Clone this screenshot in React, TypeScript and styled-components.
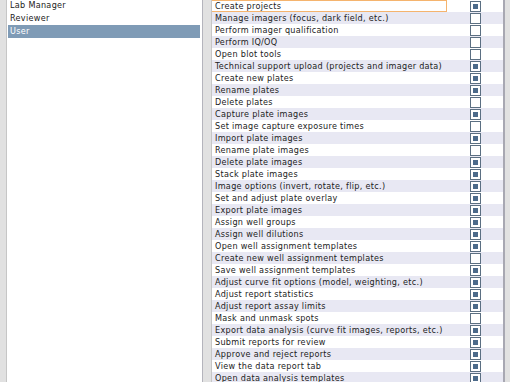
import styled, {createGlobalStyle} from "styled-components";

const roles = ["Lab Manager", "Reviewer", "User"];

const permissions: [string, boolean][] = [
    ["Create projects", true],
    ["Manage imagers (focus, dark field, etc.)", false],
    ["Perform imager qualification", false],
    ["Perform IQ/OQ", false],
    ["Open blot tools", false],
    ["Technical support upload (projects and imager data)", true],
    ["Create new plates", true],
    ["Rename plates", true],
    ["Delete plates", false],
    ["Capture plate images", true],
    ["Set image capture exposure times", false],
    ["Import plate images", true],
    ["Rename plate images", false],
    ["Delete plate images", true],
    ["Stack plate images", true],
    ["Image options (invert, rotate, flip, etc.)", true],
    ["Set and adjust plate overlay", true],
    ["Export plate images", true],
    ["Assign well groups", true],
    ["Assign well dilutions", true],
    ["Open well assignment templates", true],
    ["Create new well assignment templates", false],
    ["Save well assignment templates", true],
    ["Adjust curve fit options (model, weighting, etc.)", true],
    ["Adjust report statistics", true],
    ["Adjust report assay limits", true],
    ["Mask and unmask spots", false],
    ["Export data analysis (curve fit images, reports, etc.)", true],
    ["Submit reports for review", true],
    ["Approve and reject reports", true],
    ["View the data report tab", true],
    ["Open data analysis templates", true],
];

export default function App() {
    return <>
        <GlobalStyle/>
        <Page>
            <RoleList>
                {roles.map(r => <RoleItem key={r} $selected={r === "User"}>{r}</RoleItem>)}
            </RoleList>
            <PermissionTable>
                {permissions.map(([name, on], i) => (
                    <Row key={name} $alt={i % 2 === 1}>
                        <NameCell $focused={i === 0}>{name}</NameCell>
                        <CheckCell>
                            <Check $on={on}/>
                        </CheckCell>
                    </Row>
                ))}
            </PermissionTable>
        </Page>
    </>
}

const GlobalStyle = createGlobalStyle`
  html, body {
    margin: 0;
    padding: 0;
    background: #e1e1e1;
  }

  body {
    font-family: "DejaVu Sans Condensed", "DejaVu Sans", sans-serif;
    font-size: 9px;
    letter-spacing: 0.3px;
    color: #222;
  }
`

const Page = styled.div`
  display: flex;
  height: 382px;
  width: 510px;
  overflow: hidden;
  padding-left: 6px;
  box-sizing: border-box;
  background: #e1e1e1;
`

const RoleList = styled.div`
  width: 197px;
  box-sizing: border-box;
  background: #fff;
  border-left: 1px solid #c6c6c6;
  border-right: 1px solid #b4b4bc;
  padding: 0 2px 0 1px;
  margin-top: -1px;
`

const RoleItem = styled.div<{ $selected?: boolean }>`
  height: 13px;
  line-height: 13px;
  padding-left: 2px;
  white-space: nowrap;
  background: ${p => p.$selected ? "#7f9bb6" : "transparent"};
  color: ${p => p.$selected ? "#fff" : "#222"};
`

const PermissionTable = styled.div`
  margin-left: 8px;
  width: 294px;
  box-sizing: border-box;
  background: #fff;
  border-left: 1px solid #c6c6c6;
  border-right: 2px solid #a8a8b2;
`

const Row = styled.div<{ $alt?: boolean }>`
  display: grid;
  grid-template-columns: 235px 1fr;
  height: 12px;
  background: ${p => p.$alt ? "#e8e8f3" : "#fff"};
`

const NameCell = styled.div<{ $focused?: boolean }>`
  box-sizing: border-box;
  padding-left: 3px;
  white-space: nowrap;
  overflow: hidden;
  border: 1px solid ${p => p.$focused ? "#f5b46e" : "transparent"};
  border-left: none;
  line-height: 10px;
`

const CheckCell = styled.div`
  display: flex;
  align-items: center;
  justify-content: center;
`

const Check = styled.div<{ $on?: boolean }>`
  width: 11px;
  height: 11px;
  box-sizing: border-box;
  border: 1px solid #5b6f82;
  background: #fff;
  padding: 2px;

  &::after {
    content: "";
    display: ${p => p.$on ? "block" : "none"};
    width: 100%;
    height: 100%;
    background: #4c6a8a;
  }
`
